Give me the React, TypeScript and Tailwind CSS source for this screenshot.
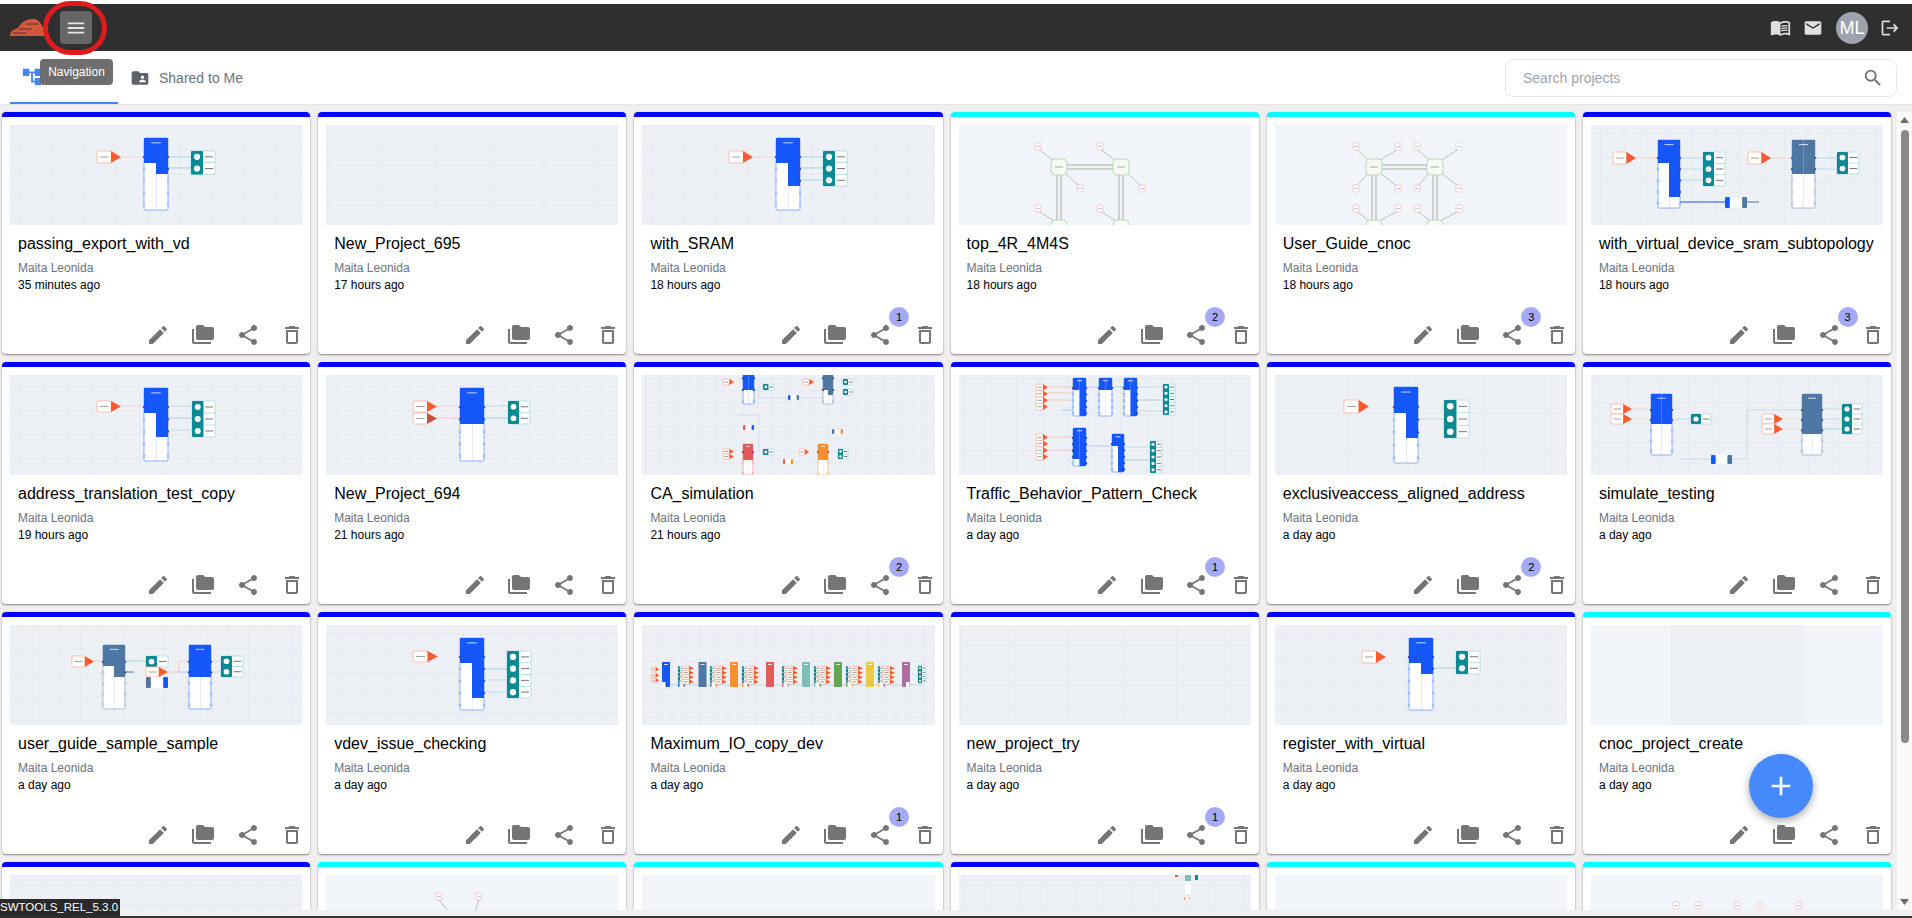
import React from 'react'
import {
  MdAccountTree, MdAdd, MdEdit, MdEmail, MdFolderCopy, MdFolderShared, MdLogout,
  MdMenu, MdMenuBook, MdOutlineDelete, MdSearch, MdShare,
} from 'react-icons/md'

const BLUE = '#1557fb'
const STEEL = '#4f77a3'
const ORANGE = '#f78f2e'
const RED = '#e35a5a'
const TEAL = '#0b8a96'

// diagram pieces, coordinates are px inside the 292x100 thumbnail
const Grid = ({ sx = 24, sy = 24, ox = 0, oy = 0 }: { sx?: number; sy?: number; ox?: number; oy?: number }) => {
  const xs: number[] = []
  const ys: number[] = []
  for (let x = ox; x < 292; x += sx) xs.push(x)
  for (let y = oy; y < 100; y += sy) ys.push(y)
  return (
    <g stroke="#e3e8ee" strokeWidth="0.6">
      {xs.map((x) => <line key={x} x1={x} y1="0" x2={x} y2="100" />)}
      {ys.map((y) => <line key={y} x1="0" y1={y} x2="292" y2={y} />)}
    </g>
  )
}

const Wire = ({ x1, y1, x2, y2, c = '#bfdde2', w = 1 }: { x1: number; y1: number; x2: number; y2: number; c?: string; w?: number }) => (
  <line x1={x1} y1={y1} x2={x2} y2={y2} stroke={c} strokeWidth={w} />
)

const Init = ({ x, y, w = 24, h = 12, c = '#fb5a2e' }: { x: number; y: number; w?: number; h?: number; c?: string }) => (
  <g>
    <rect x={x} y={y} width={w * 0.62} height={h} rx="1" fill="#fff" stroke="#fbb09a" strokeWidth="0.8" />
    <rect x={x + w * 0.12} y={y + h / 2 - 0.4} width={w * 0.36} height="0.8" fill="#8a8a8a" />
    <polygon points={`${x + w * 0.58},${y} ${x + w},${y + h / 2} ${x + w * 0.58},${y + h}`} fill={c} />
  </g>
)

const Block = ({ x, y, w = 24, h = 72, l, r, c = BLUE, ports = 5 }: { x: number; y: number; w?: number; h?: number; l: number; r: number; c?: string; ports?: number }) => {
  const mid = x + w / 2
  const rows = Array.from({ length: ports }, (_, i) => y + (h * (19 + (i * 48) / Math.max(ports - 1, 1))) / 72)
  return (
    <g>
      <rect x={x} y={y} width={w} height={h} rx="1.5" fill="#fff" stroke={c} strokeOpacity="0.5" strokeWidth="0.9" />
      <rect x={mid} y={y} width="0.5" height={h} fill={c} fillOpacity="0.25" />
      <rect x={x} y={y} width={w / 2} height={l - y} fill={c} />
      <rect x={mid} y={y} width={w / 2} height={r - y} fill={c} />
      <rect x={mid - w * 0.2} y={y + h * 0.06} width={w * 0.4} height="1" fill="#fff" fillOpacity="0.75" />
      {rows.map((py) => (
        <g key={py}>
          <circle cx={x} cy={py} r="1" fill={py < l ? '#23408f' : '#fff'} stroke={c} strokeWidth="0.4" />
          <circle cx={x + w} cy={py} r="1" fill={py < r ? '#23408f' : '#fff'} stroke={c} strokeWidth="0.4" />
        </g>
      ))}
    </g>
  )
}

const Target = ({ x, y, w = 24, h, n }: { x: number; y: number; w?: number; h: number; n: number }) => {
  const rh = h / n
  return (
    <g>
      <rect x={x} y={y} width={w} height={h} rx="1" fill="#fff" stroke="#a9dadd" strokeWidth="0.8" />
      <rect x={x} y={y} width={w * 0.5} height={h} rx="1" fill={TEAL} />
      {Array.from({ length: n }, (_, i) => (
        <g key={i}>
          <circle cx={x + w * 0.25} cy={y + rh * i + rh / 2} r={Math.min(rh * 0.3, w * 0.13)} fill="#fff" />
          <rect x={x + w * 0.58} y={y + rh * i + rh / 2 - 0.5} width={w * 0.34} height="1" fill="#777" />
          {i > 0 && <rect x={x + w * 0.5} y={y + rh * i - 0.3} width={w * 0.5} height="0.6" fill="#8ccfd3" />}
        </g>
      ))}
    </g>
  )
}

const Bridge = ({ x, y, w = 22, h = 11, a = BLUE, b = STEEL }: { x: number; y: number; w?: number; h?: number; a?: string; b?: string }) => (
  <g>
    <rect x={x} y={y} width={w} height={h} fill="#fff" />
    <rect x={x} y={y} width={w * 0.22} height={h} rx="1" fill={a} />
    <rect x={x + w * 0.78} y={y} width={w * 0.22} height={h} rx="1" fill={b} />
  </g>
)

const Router = ({ x, y }: { x: number; y: number }) => (
  <g>
    <rect x={x} y={y} width="16" height="16" rx="4" fill="#f6f9f5" stroke="#a5d79f" strokeWidth="0.8" />
    <rect x={x + 4} y={y + 7.6} width="8" height="0.8" fill="#999" />
  </g>
)

const Node = ({ x, y, c = '#f3b8c0' }: { x: number; y: number; c?: string }) => (
  <g>
    <rect x={x} y={y} width="6" height="7" rx="1" fill="#fff" stroke={c} strokeWidth="0.7" />
    <rect x={x + 1} y={y + 3.2} width="4" height="0.6" fill="#aaa" />
  </g>
)

const Mesh = ({ wide }: { wide?: boolean }) => {
  const rx = wide ? [91, 152] : [92, 154]
  const dx = wide ? [[-13, 29], [-13, 29]] : [[-16, 26], [-16, 26]]
  return (
    <g>
      <Wire x1={rx[0] + 16} y1={40} x2={rx[1]} y2={40} c="#a8b0a8" />
      <Wire x1={rx[0] + 16} y1={44} x2={rx[1]} y2={44} c="#a8b0a8" />
      {rx.map((x, k) => (
        <g key={x}>
          <Wire x1={x + 6} y1={50} x2={x + 6} y2={100} c="#a8b0a8" />
          <Wire x1={x + 10} y1={50} x2={x + 10} y2={100} c="#a8b0a8" />
          <Wire x1={x + dx[k][0] + 3} y1={24} x2={x + 3} y2={36} c="#888" w={0.5} />
          <Wire x1={x + 13} y1={47} x2={x + dx[k][1] + 3} y2={62} c="#888" w={0.5} />
          <Wire x1={x + dx[k][0] + 3} y1={86} x2={x + 5} y2={97} c="#888" w={0.5} />
          <Node x={x + dx[k][0]} y={18} />
          <Node x={x + dx[k][1]} y={60} />
          <Node x={x + dx[k][0]} y={80} />
          {wide && (
            <g>
              <Wire x1={x + 13} y1={36} x2={x + dx[k][1] + 3} y2={24} c="#888" w={0.5} />
              <Wire x1={x + 3} y1={47} x2={x + dx[k][0] + 3} y2={62} c="#888" w={0.5} />
              <Wire x1={x + 11} y1={97} x2={x + dx[k][1] + 3} y2={86} c="#888" w={0.5} />
              <Node x={x + dx[k][1]} y={18} c={k === 1 ? '#b8e2d8' : '#f3b8c0'} />
              <Node x={x + dx[k][0]} y={60} />
              <Node x={x + dx[k][1]} y={80} />
            </g>
          )}
          <Router x={x} y={34} />
          <Router x={x} y={95} />
        </g>
      ))}
    </g>
  )
}

const Single = ({ lf, rf, rows, bx = 134 }: { lf: number; rf: number; rows: number; bx?: number }) => {
  const ty = [32, 43, 55, 67]
  return (
    <g>
      <Grid sx={32} sy={24} ox={10} oy={1} />
      <Wire x1={112} y1={32} x2={bx} y2={32} c="#f4d6cc" />
      {ty.slice(0, rows).map((y) => <Wire key={y} x1={158} y1={y} x2={181} y2={y} w={1.4} />)}
      <Init x={87} y={26} />
      <Block x={bx} y={13} l={lf} r={rf} />
      <Target x={181} y={26} h={rows * 11.7} n={rows} />
    </g>
  )
}

const maxBlocks = [
  { x: 20, c: BLUE, t: 36, i: 9 },
  { x: 56.5, c: STEEL, t: 68, i: 40 },
  { x: 88, c: ORANGE, t: 100, i: 73 },
  { x: 124, c: RED, t: 140, i: 105 },
  { x: 160, c: '#7cbfb8', t: 172, i: 144 },
  { x: 192, c: '#5fa84f', t: 204, i: 177 },
  { x: 224, c: '#edc944', t: 236, i: 209 },
  { x: 260, c: '#a8709e', t: 276, i: 241 },
]

const thumbs: Record<string, React.ReactNode> = {
  a1: <Single lf={38} rf={49} rows={2} />,
  empty: <Grid sx={54} sy={20} ox={2} oy={20} />,
  a3: <Single lf={38} rf={61} rows={3} />,
  mesh1: <Mesh />,
  mesh2: <Mesh wide />,
  vdev: (
    <g>
      <Grid sx={23} sy={25} ox={10} oy={8} />
      <Wire x1={45} y1={33} x2={67} y2={33} c="#f4d6cc" />
      <Wire x1={89} y1={33} x2={112} y2={33} />
      <Wire x1={89} y1={44} x2={112} y2={44} />
      <Wire x1={89} y1={55} x2={112} y2={55} />
      <Wire x1={89} y1={77} x2={134} y2={77} c={BLUE} />
      <Wire x1={156} y1={77} x2={168} y2={77} c={STEEL} />
      <Wire x1={180} y1={33} x2={201} y2={33} c="#f4d6cc" />
      <Wire x1={224} y1={33} x2={246} y2={33} />
      <Wire x1={224} y1={44} x2={246} y2={44} />
      <Init x={22} y={27} w={23} />
      <Block x={67} y={15} w={22} h={68} l={38} r={72} />
      <Target x={112} y={27} w={22} h={34} n={3} />
      <Init x={157} y={27} w={23} />
      <Block x={201} y={15} w={23} h={68} l={49} r={49} c={STEEL} />
      <Target x={246} y={27} w={22} h={22} n={2} />
      <Bridge x={134} y={72} />
    </g>
  ),
  addr: (
    <g>
      <Grid sx={24} sy={24} ox={10} oy={12} />
      <Wire x1={111} y1={31} x2={134} y2={31} c="#f4d6cc" />
      <Wire x1={158} y1={31} x2={182} y2={31} />
      <Wire x1={158} y1={43} x2={182} y2={43} w={1.4} />
      <Wire x1={158} y1={55} x2={182} y2={55} />
      <Init x={87} y={26} h={11} />
      <Block x={134} y={13} h={73} l={38} r={62} />
      <Target x={182} y={26} w={23} h={36} n={3} />
    </g>
  ),
  p694: (
    <g>
      <Grid sx={24} sy={24} ox={10} oy={12} />
      <Wire x1={111} y1={31} x2={134} y2={31} c="#f4d6cc" />
      <Wire x1={111} y1={43} x2={134} y2={43} c="#f4d6cc" w={1.4} />
      <Wire x1={159} y1={31} x2={182} y2={31} />
      <Wire x1={159} y1={43} x2={182} y2={43} w={1.4} />
      <Init x={87} y={26} h={11} />
      <Init x={87} y={38} h={11} c="#c8502f" />
      <Block x={134} y={13} h={73} l={49} r={49} />
      <Target x={182} y={26} w={22} h={23} n={2} />
    </g>
  ),
  ca: (
    <g>
      <Grid sx={14} sy={12} ox={4} oy={4} />
      <path d="M117 9 V23 H181 M181 15 V23 M96 40 H117 V50 M117 56 V76" fill="none" stroke="#c8d5ee" strokeWidth="0.7" />
      <Init x={81} y={4} w={11} h={6} />
      <Block x={101} y={-6} w={11} h={35} l={15} r={15} ports={3} />
      <Target x={121} y={9} w={11} h={6} n={1} />
      <Bridge x={146} y={20} w={11} h={5} />
      <Init x={161} y={4} w={11} h={6} />
      <Block x={181} y={-6} w={10} h={35} l={15} r={20} c={STEEL} ports={3} />
      <Target x={201} y={4} w={10} h={6} n={1} />
      <Target x={201} y={14} w={10} h={6} n={1} />
      <Bridge x={101} y={50} w={11} h={5} a={RED} b={BLUE} />
      <Bridge x={190} y={54} w={11} h={5} a={STEEL} b={ORANGE} />
      <Init x={81} y={74} w={11} h={5} />
      <Init x={81} y={79} w={11} h={5} />
      <Block x={101} y={69} w={10} h={31} l={85} r={85} c={RED} ports={3} />
      <Target x={121} y={74} w={11} h={6} n={1} />
      <Bridge x={141} y={84} w={10} h={5} a={RED} b={ORANGE} />
      <Init x={157} y={74} w={10} h={6} />
      <Block x={176} y={69} w={10} h={31} l={85} r={85} c={ORANGE} ports={3} />
      <Target x={196} y={74} w={10} h={10} n={2} />
    </g>
  ),
  traffic: (
    <g>
      <Grid sx={26} sy={36} ox={6} oy={4} />
      <Wire x1={89} y1={12} x2={114} y2={12} c="#f9c9b8" />
      <Wire x1={89} y1={18} x2={114} y2={18} c="#f9c9b8" />
      <Wire x1={89} y1={25} x2={114} y2={25} c="#f9c9b8" />
      <Wire x1={102} y1={35} x2={114} y2={35} c="#b9c9f2" />
      <Wire x1={127} y1={12} x2={165} y2={12} c="#b9c9f2" />
      <Wire x1={178} y1={12} x2={204} y2={12} />
      <Wire x1={178} y1={25} x2={204} y2={25} w={1.4} />
      <Wire x1={178} y1={36} x2={204} y2={36} />
      {[9, 15.5, 22, 28.5, 59, 65.5, 72, 78.5].map((y) => <Init key={y} x={77} y={y} w={12} h={6.5} />)}
      <Block x={114} y={3} w={13} h={38} l={15} r={41} />
      <Block x={140} y={3} w={13} h={38} l={15} r={15} />
      <Block x={165} y={3} w={13} h={38} l={15} r={41} />
      <Target x={204} y={9} w={12} h={31} n={5} />
      <Wire x1={89} y1={62} x2={114} y2={62} c="#f9c9b8" />
      <Wire x1={89} y1={75} x2={114} y2={75} c="#f9c9b8" />
      <Wire x1={127} y1={71} x2={153} y2={71} c="#b9c9f2" />
      <Wire x1={165} y1={72} x2={191} y2={72} />
      <Wire x1={165} y1={85} x2={191} y2={85} w={1.4} />
      <Block x={114} y={53} w={13} h={38} l={84} r={91} />
      <Block x={153} y={59} w={12} h={38} l={71} r={97} />
      <Target x={191} y={66} w={12} h={32} n={5} />
    </g>
  ),
  excl: (
    <g>
      <Grid sx={68} sy={36} ox={4} oy={38} />
      <Wire x1={94} y1={31} x2={119} y2={31} c="#eef2f2" />
      <Wire x1={143} y1={31} x2={169} y2={31} c="#dfeeee" />
      <Wire x1={143} y1={44} x2={169} y2={44} />
      <Init x={69} y={25} w={25} h={13} />
      <Block x={119} y={12} h={76} l={38} r={63} />
      <Target x={169} y={25} w={25} h={38} n={3} />
    </g>
  ),
  sim: (
    <g>
      <Grid sx={30} sy={20} ox={8} oy={8} />
      <Wire x1={41} y1={34} x2={60} y2={34} c="#f4d6cc" />
      <Wire x1={41} y1={44} x2={60} y2={44} c="#f4d6cc" />
      <Wire x1={81} y1={44} x2={100} y2={44} />
      <Wire x1={81} y1={34} x2={90} y2={34} c="#d7e0ea" />
      <path d="M90 84 H120 M141 84 H156 V35 H211" fill="none" stroke="#cbd9e6" strokeWidth="1" />
      <Wire x1={192} y1={44} x2={211} y2={44} c="#f4d6cc" />
      <Wire x1={192} y1={54} x2={211} y2={54} c="#f4d6cc" />
      <Wire x1={231} y1={34} x2={251} y2={34} />
      <Wire x1={231} y1={44} x2={251} y2={44} />
      <Wire x1={231} y1={54} x2={251} y2={54} w={1.4} />
      <Init x={20} y={29} w={21} h={10} />
      <Init x={20} y={39} w={21} h={10} />
      <Block x={60} y={19} w={21} h={61} l={49} r={49} />
      <Target x={100} y={39} w={20} h={10} n={1} />
      <Bridge x={120} y={80} w={21} h={9} />
      <Init x={171} y={39} w={21} h={10} />
      <Init x={171} y={49} w={21} h={10} />
      <Block x={211} y={19} w={20} h={61} l={59} r={59} c={STEEL} />
      <Target x={251} y={29} w={20} h={30} n={3} />
    </g>
  ),
  guide: (
    <g>
      <Grid sx={21} sy={24} ox={8} oy={0} />
      <Wire x1={84} y1={36} x2={93} y2={36} c="#f9c9b8" />
      <Wire x1={115} y1={36} x2={136} y2={36} w={1.4} />
      <Wire x1={115} y1={47} x2={124} y2={47} c={STEEL} />
      <path d="M158 47 H169 V36 H179" fill="none" stroke="#f9c9b8" strokeWidth="1" />
      <Wire x1={169} y1={47} x2={179} y2={47} c="#b9c9f2" />
      <Wire x1={201} y1={36} x2={211} y2={36} />
      <Wire x1={201} y1={47} x2={211} y2={47} />
      <Init x={62} y={31} w={22} h={11} />
      <Block x={93} y={20} w={22} h={64} l={41} r={52} c={STEEL} />
      <Target x={136} y={31} w={22} h={11} n={1} />
      <Init x={136} y={42} w={22} h={10} />
      <Bridge x={136} y={52} a={STEEL} b={BLUE} />
      <Block x={179} y={20} w={22} h={64} l={52} r={52} />
      <Target x={211} y={31} w={22} h={21} n={2} />
    </g>
  ),
  issue: (
    <g>
      <Grid sx={24} sy={20} ox={12} oy={9} />
      <Wire x1={158} y1={44} x2={181} y2={44} w={1.4} />
      <Wire x1={158} y1={55} x2={181} y2={55} />
      <Wire x1={158} y1={67} x2={181} y2={67} />
      <Init x={87} y={26} w={25} h={11} />
      <Block x={134} y={13} l={38} r={73} />
      <Target x={181} y={26} h={47} n={4} />
    </g>
  ),
  max: (
    <g>
      <Grid sx={14} sy={14} ox={2} oy={8} />
      <Wire x1={20} y1={60} x2={280} y2={60} c="#c7cfe6" />
      {maxBlocks.map((b, k) => (
        <g key={b.x}>
          {(k === 0 ? [44, 50, 55] : [43, 47.5, 52, 56.5]).map((y) => (
            <Init key={y} x={b.i} y={y - 2} w={k === 0 ? 8 : 12} h={4.4} />
          ))}
          <rect x={b.x} y={37} width="8" height="25" rx="0.8" fill={b.c} />
          <rect x={b.x + 2} y={39} width="4" height="0.8" fill="#fff" />
          <Target x={b.t} y={41} w={4 + (k === 7 ? 4 : 0)} h={17} n={4} />
          {k < 7 && <Bridge x={b.t} y={58} w={7} h={4} a={b.c} b={maxBlocks[k + 1].c} />}
        </g>
      ))}
      <rect x={20} y={57} width="3.5" height="5" fill="#fff" />
      <rect x={264} y={57} width="3.5" height="5" fill="#fff" />
    </g>
  ),
  reg: (
    <g>
      <Grid sx={24} sy={24} ox={11} oy={14} />
      <Wire x1={158} y1={43} x2={181} y2={43} w={1.4} />
      <Init x={87} y={26} />
      <Block x={134} y={13} l={38} r={49} />
      <Target x={181} y={26} h={23} n={2} />
    </g>
  ),
  cnoc: (
    <g>
      <rect x="79" y="0" width="133" height="100" fill="#edf0f5" />
      <g stroke="#e6eaef" strokeWidth="0.5">
        {[92, 108, 124, 140, 156, 172, 188, 204].map((x) => <line key={x} x1={x} y1="0" x2={x} y2="100" />)}
        {[12, 30, 48, 66, 84].map((y) => <line key={y} x1="79" y1={y} x2="212" y2={y} />)}
      </g>
    </g>
  ),
  r41: <Grid sx={24} sy={20} ox={8} oy={10} />,
  r42: (
    <g>
      <path d="M113 25 L130 45 H146 L153 25" fill="none" stroke="#999" strokeWidth="0.6" />
      <Node x={110} y={18} />
      <Node x={150} y={18} />
    </g>
  ),
  r44: (
    <g>
      <Grid sx={28} sy={22} ox={4} oy={10} />
      <rect x="226" y="0" width="6" height="6" fill="#7cbfb8" />
      <rect x="226" y="6" width="6" height="13" fill="#fff" />
      <rect x="236" y="0" width="3" height="5" fill={TEAL} />
      <rect x="216" y="0" width="3" height="2" fill="#fb5a2e" />
      <Bridge x={225} y={22} w={6} h={3} a={ORANGE} b="#edc944" />
    </g>
  ),
  r46: (
    <g>
      {[82, 104, 143, 166, 205].map((x) => <Node key={x} x={x} y={27} />)}
    </g>
  ),
}

type Card = { title?: string; time?: string; thumb: string; cyan?: boolean; badge?: number }

const cards: Card[] = [
  { title: 'passing_export_with_vd', time: '35 minutes ago', thumb: 'a1' },
  { title: 'New_Project_695', time: '17 hours ago', thumb: 'empty' },
  { title: 'with_SRAM', time: '18 hours ago', thumb: 'a3', badge: 1 },
  { title: 'top_4R_4M4S', time: '18 hours ago', thumb: 'mesh1', cyan: true, badge: 2 },
  { title: 'User_Guide_cnoc', time: '18 hours ago', thumb: 'mesh2', cyan: true, badge: 3 },
  { title: 'with_virtual_device_sram_subtopology', time: '18 hours ago', thumb: 'vdev', badge: 3 },
  { title: 'address_translation_test_copy', time: '19 hours ago', thumb: 'addr' },
  { title: 'New_Project_694', time: '21 hours ago', thumb: 'p694' },
  { title: 'CA_simulation', time: '21 hours ago', thumb: 'ca', badge: 2 },
  { title: 'Traffic_Behavior_Pattern_Check', time: 'a day ago', thumb: 'traffic', badge: 1 },
  { title: 'exclusiveaccess_aligned_address', time: 'a day ago', thumb: 'excl', badge: 2 },
  { title: 'simulate_testing', time: 'a day ago', thumb: 'sim' },
  { title: 'user_guide_sample_sample', time: 'a day ago', thumb: 'guide' },
  { title: 'vdev_issue_checking', time: 'a day ago', thumb: 'issue' },
  { title: 'Maximum_IO_copy_dev', time: 'a day ago', thumb: 'max', badge: 1 },
  { title: 'new_project_try', time: 'a day ago', thumb: 'empty', badge: 1 },
  { title: 'register_with_virtual', time: 'a day ago', thumb: 'reg' },
  { title: 'cnoc_project_create', time: 'a day ago', thumb: 'cnoc', cyan: true },
  // last row is cut by the window, only the top of the thumbnails shows
  { thumb: 'r41' },
  { thumb: 'r42', cyan: true },
  { thumb: 'blank', cyan: true },
  { thumb: 'r44' },
  { thumb: 'blank', cyan: true },
  { thumb: 'r46', cyan: true },
]

const ProjectCard = ({ card }: { card: Card }) => (
  <div className="flex flex-col rounded bg-white shadow-[0_1px_2px_rgba(0,0,0,0.45)] overflow-hidden">
    <div className={card.cyan ? 'h-[5px] bg-[#00ffff]' : 'h-[5px] bg-[#0000ff]'} />
    <div className={card.cyan ? 'mx-2 mt-2 h-[100px] bg-[#f1f5f9]' : 'mx-2 mt-2 h-[100px] bg-[#edf0f5]'}>
      <svg width="100%" height="100" viewBox="0 0 292 100" preserveAspectRatio="xMinYMin" className="block overflow-hidden">
        {thumbs[card.thumb]}
      </svg>
    </div>
    {card.title && (
      <>
        <div className="mt-[7px] px-4 text-base leading-6 text-black whitespace-nowrap">{card.title}</div>
        <div className="mt-1 px-4 text-xs leading-4 text-[#6b7280]">Maita Leonida</div>
        <div className="mt-px px-4 text-xs leading-4 text-black">{card.time}</div>
        <div className="mt-auto flex justify-end gap-[20.6px] pr-[6px] pb-[7px] text-[#757575]">
          <MdEdit size={24} />
          <MdFolderCopy size={24} />
          <div className="relative">
            <MdShare size={24} />
            {card.badge && (
              <span className="absolute -top-4 left-[21px] flex h-5 w-5 items-center justify-center rounded-full bg-[#a5aaf8] text-[11px] text-black">
                {card.badge}
              </span>
            )}
          </div>
          <MdOutlineDelete size={24} />
        </div>
      </>
    )}
  </div>
)

const App = () => {
  return (
    <div className="relative flex h-screen flex-col overflow-hidden bg-[#f0eeef] font-['Liberation_Sans',Arial,sans-serif]">
      <div className="h-1 bg-white" />

      {/* Header */}
      <div className="flex h-[47px] items-center justify-between bg-[#2f2f2f] pl-[10px] pr-[12px]">
        <div className="flex items-center gap-3">
          <svg width="38" height="18" viewBox="0 0 38 18">
            <path d="M0 17 C0 12 4 10 8 9 C11 3 17 0 23 0 C30 0 33 8 35 13 L38 14 L37 17 Z" fill="#d4573a" />
            <path d="M3 14 H16 M9 10 H22 M16 5 H28" stroke="#2f2f2f" strokeWidth="0.8" fill="none" />
          </svg>
          <button className="flex h-[33px] w-8 items-center justify-center rounded bg-[#666666] text-[#e5e5e5]">
            <MdMenu size={22} />
          </button>
        </div>
        <div className="flex items-center text-[#e0e0e0]">
          <MdMenuBook size={21} />
          <MdEmail size={20} className="ml-[12px]" />
          <div className="ml-[13px] flex h-8 w-8 items-center justify-center rounded-full bg-[#9ca3af] text-lg text-white">ML</div>
          <MdLogout size={20} className="ml-[12px]" />
        </div>
      </div>

      {/* Tabs and search */}
      <div className="flex h-[54px] items-stretch justify-between border-b border-[#e5e5e5] bg-white pl-[10px] pr-[15px]">
        <div className="flex text-sm text-[#6b7280]">
          <div className="flex w-[108px] items-center justify-center gap-2 border-b-2 border-[#4285f4]">
            <MdAccountTree size={22} className="text-[#4285f4]" />
            <span>Personal</span>
          </div>
          <div className="flex items-center gap-[9px] pl-3">
            <MdFolderShared size={20} className="text-[#5f6368]" />
            <span>Shared to Me</span>
          </div>
        </div>
        <div className="flex items-center">
          <div className="flex h-[38px] w-[392px] items-center rounded-lg border border-[#e5e7eb] pl-[17px] pr-[12px]">
            <input className="flex-1 bg-transparent text-sm text-[#374151] placeholder-[#9ca3af] focus:outline-none" placeholder="Search projects" />
            <MdSearch size={22} className="text-[#6b7280]" />
          </div>
        </div>
      </div>

      {/* Project grid with its scrollbar */}
      <div className="flex min-h-0 flex-1">
        <div className="min-w-0 flex-1 overflow-hidden pl-[2px] pt-[7px]">
          <div className="grid auto-rows-[242px] grid-cols-[repeat(6,308.2px)] gap-2">
            {cards.map((card, i) => <ProjectCard key={i} card={card} />)}
          </div>
        </div>
        <div className="mt-[7px] flex w-[15px] flex-col items-center bg-[#fafafa]">
          <svg width="9" height="6" viewBox="0 0 9 6" className="mt-[5px]"><polygon points="4.5,0 9,6 0,6" fill="#6b6b6b" /></svg>
          <div className="mt-[7px] h-[613px] w-2 rounded-full bg-[#8a8a8a]" />
          <svg width="9" height="6" viewBox="0 0 9 6" className="mb-[5px] mt-auto"><polygon points="0,0 9,0 4.5,6" fill="#6b6b6b" /></svg>
        </div>
      </div>
      <div className="h-2 border-b-2 border-[#333333] bg-[#f0eeef]" />

      {/* Things lying over the page */}
      <div className="absolute left-[43px] top-px h-[54px] w-[64px] rounded-full border-[5px] border-[#e01b1b]" />
      <div className="absolute left-10 top-[59px] flex h-[26px] w-[73px] items-center justify-center rounded bg-[#666666]/95 text-xs text-white">Navigation</div>
      <button className="absolute left-[1749px] top-[754px] flex h-16 w-16 items-center justify-center rounded-full bg-[#4589fd] text-white shadow-[0_3px_8px_rgba(0,0,0,0.35)]">
        <MdAdd size={32} />
      </button>
      <div className="absolute bottom-px left-0 flex h-[18px] w-[120px] items-center overflow-hidden whitespace-nowrap bg-[#2a2a2a] text-[11.5px] text-white">SWTOOLS_REL_5.3.0</div>
    </div>
  )
}

export default App
